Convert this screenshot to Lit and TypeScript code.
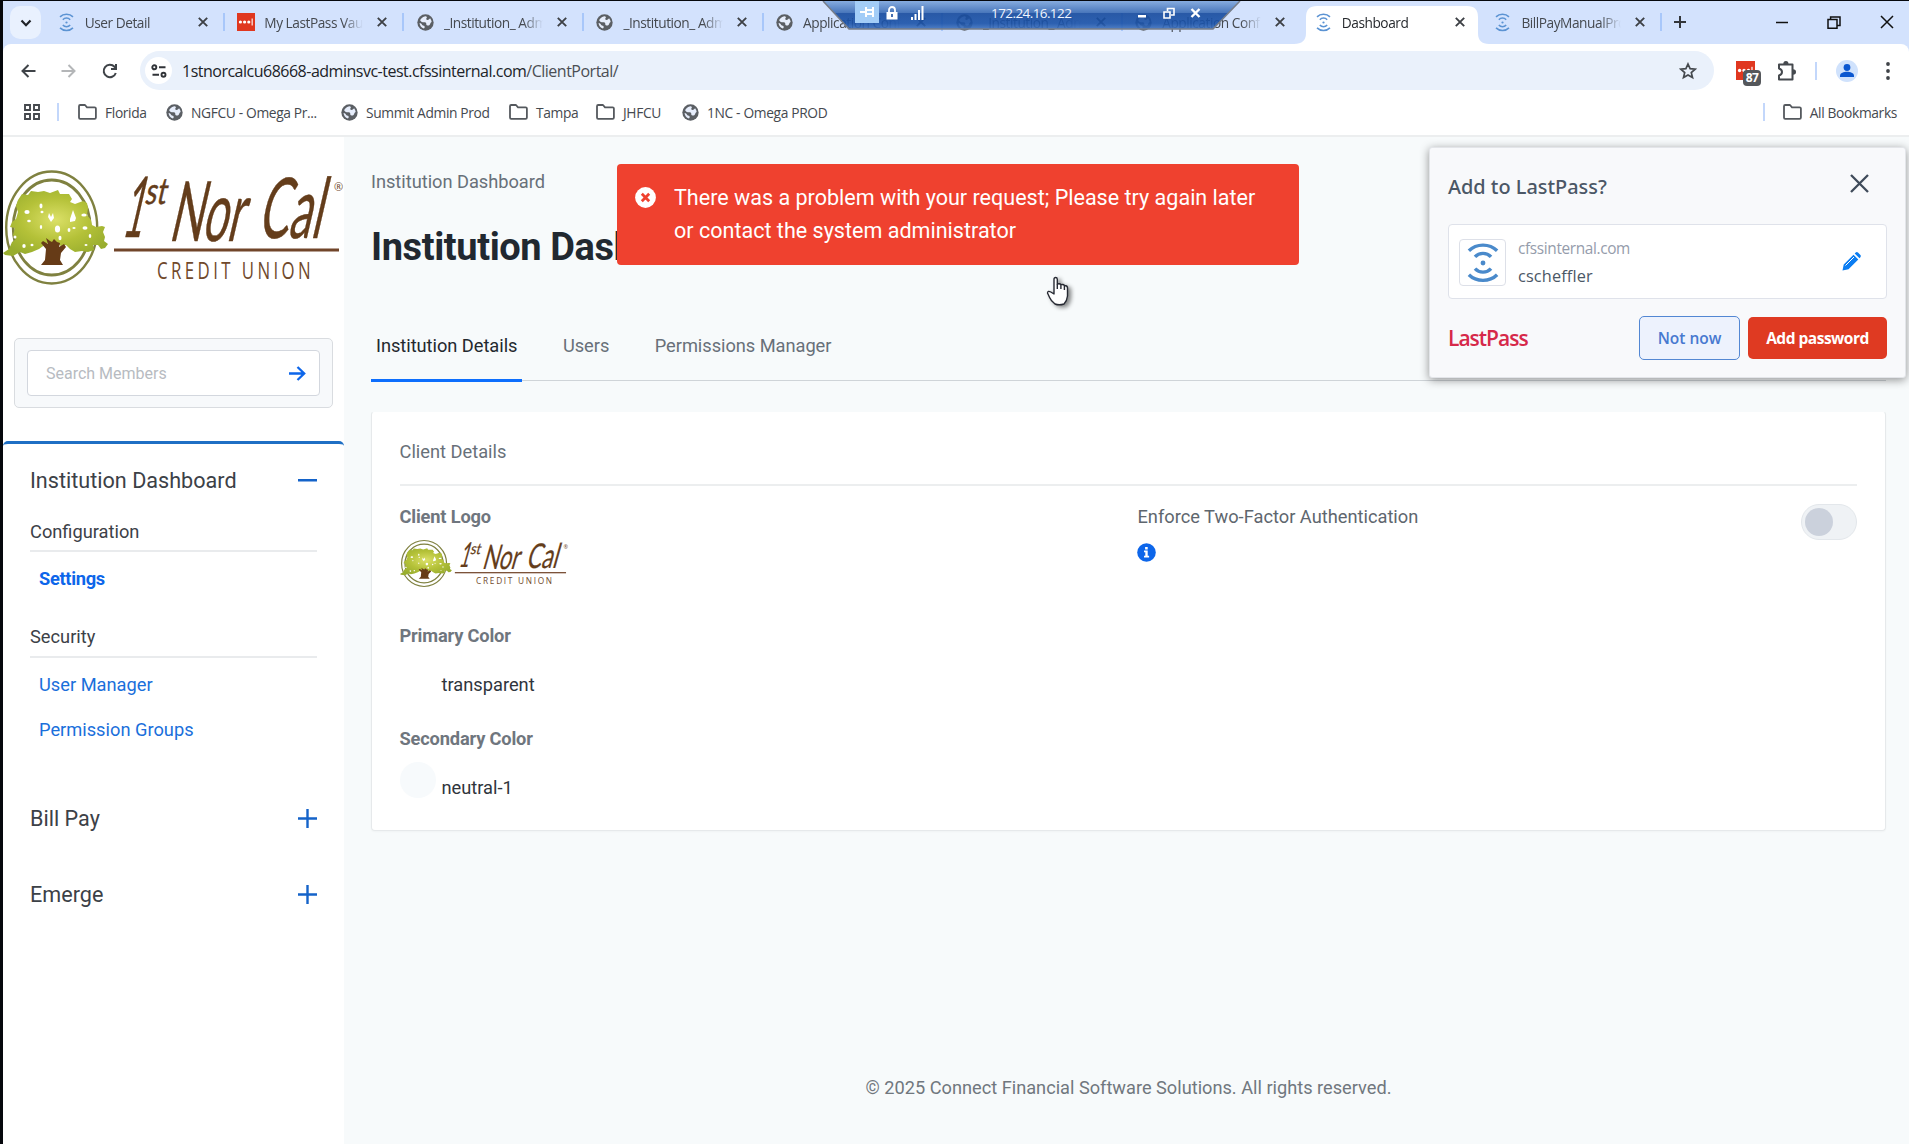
import { LitElement, html, css, svg, nothing } from "lit";
import { customElement, property } from "lit/decorators.js";

const wave = html`<svg viewBox="0 0 34 44" fill="none" stroke="currentColor" stroke-width="3.6" stroke-linecap="butt"><path d="M2 9C10 1 24 1 32 9M8.500 15.500C13 10.500 21 10.500 25.500 15.500M8.500 28C13 33 21 33 25.500 28M2 34.500C10 42.500 24 42.500 32 34.500"/><circle cx="17" cy="22" r="2.600" fill="currentColor" stroke="none"/></svg>`;
const globe = html`<svg viewBox="0 0 24 24"><circle cx="12" cy="12" r="11.500" fill="#5b5f64"/><path fill="#e6edfb" d="M10.800 3.400c-3 .8-5.200 2.600-6.400 5.400 1.200 2.400 3.400 2.900 5.600 2.900 2.400 0 3.200.9 3.100 2.600 0 1.500 1.300 1.700 2.900 1.800 1.800.2 2.200-1 2.800-2.600.4-1.200 1.300-1.500 1.900-2.500-.3-1.900-1-3.600-2.200-5-1 .6-1.300 1.800-2.500 2.200-1.300.3-2.700.1-2.900-1.200-.1-1.200 1.200-1.600.8-2.700-.4-.9-1.800-1.200-3.100-.9z"/><path fill="#e6edfb" d="M3.600 12.600c.2 3.600 2.600 6.700 6.200 7.800 1-.5 1.300-1.400 1-2.600-.3-1-1.200-1.200-2.300-1.500-1.500-.4-1.500-1.700-2.300-2.600-.6-.7-1.500-1-2.600-1.100z"/></svg>`;
const vault = html`<svg viewBox="0 0 18 18"><rect width="18" height="18" fill="#e0371f"/><g fill="#fff"><circle cx="3.400" cy="9" r="1.600"/><circle cx="7.600" cy="9" r="1.600"/><circle cx="11.800" cy="9" r="1.600"/><rect x="14.600" y="5.500" width="1.100" height="7"/></g></svg>`;
const folder = html`<svg viewBox="0 0 19 16" fill="none" stroke="#55595e" stroke-width="1.800" stroke-linejoin="round"><path d="M1 2.200Q1 1 2.200 1H7l2 2.300h7.600q1.300 0 1.300 1.300v9q0 1.300-1.300 1.300H2.200Q1 14.900 1 13.600Z"/></svg>`;
const cross = html`<svg viewBox="0 0 12 12" stroke="currentColor" stroke-width="1.900"><path d="M1.800 1.800l8.400 8.400M10.200 1.800L1.800 10.200"/></svg>`;
const tree = svg`
  <g fill="none" stroke="#7f8140"><ellipse cx="48.700" cy="57.500" rx="45.500" ry="56" stroke-width="2.400"/><ellipse cx="48.700" cy="57.500" rx="38.500" ry="47.500" stroke-width="2.800"/></g>
  <path fill="url(#leaf)" d="M15 30L19 24L25 25L28 21L35 22L41 21L47 23L55 20L57 24L66 24L69 29L67 32L72 34L80 31L84 33L85 38L84 45L88 50L89 55L93 57L99 56L102 57L100 62L102 67L101 71L105 74L102 78L98 79L95 75L90 75L91 80L85 82L79 81L72 82L67 79L63 75L58 76L50 72L43 74L36 79L29 82L22 84L17 82L10 86L2 85L0 83L6 79L9 72L13 69L10 65L12 58L7 57L9 52L13 49L15 42L13 36Z"/>
  <g fill="#fff"><ellipse cx="38" cy="36" rx="1.500" ry="2.400"/><path d="M46 43l2 4 2-4 1 5-3 4-3-5zM67 49l3-9 3 8-1 3-5 1z"/><ellipse cx="54.500" cy="59" rx="2.600" ry="3.500"/><ellipse cx="26" cy="51" rx="1.800" ry="1.200"/><ellipse cx="24" cy="42" rx="2.600" ry="2"/><ellipse cx="39" cy="42" rx="1.500" ry="1.300"/><ellipse cx="82" cy="58" rx="2.500" ry="1.700"/><ellipse cx="57" cy="68" rx="1.500" ry="2.300"/><ellipse cx="87" cy="66" rx="1.300" ry="2"/><ellipse cx="38" cy="57" rx="1.200" ry="2"/><ellipse cx="21" cy="76" rx="1.700" ry="2"/><ellipse cx="29" cy="75" rx="1.500" ry="1.300"/><ellipse cx="66" cy="60" rx="1.400" ry="2"/><ellipse cx="81" cy="45" rx="2.700" ry="1.500"/><ellipse cx="71" cy="58" rx="1.600" ry="1"/><ellipse cx="12" cy="67" rx="1.500" ry="1.500"/><ellipse cx="83" cy="75" rx="1.500" ry="1"/></g>
  <path fill="#663b17" d="M38 95l4-5 1-11-5-6 2-2 5 3-2-6 4 3 2 1 2-3 3 3 3 1-1 4 5-3 2 3-5 6-1 7 3 5z"/>`;

@customElement("union-logo")
export class UnionLogo extends LitElement {
  static styles = css`
    :host { display: block; }
    svg { display: block; width: 100%; height: 100%; overflow: visible; }
    .script { font-family: Lato, "Open Sans", sans-serif; fill: #643d1b; stroke: #643d1b; stroke-width: .5; font-weight: 400; }
    .caps { font-family: "Open Sans", sans-serif; fill: #70492b; }
  `;
  render() {
    return html`<svg viewBox="0 0 342 115" preserveAspectRatio="none">
      <defs><radialGradient id="leaf" cx=".5" cy=".45" r=".6"><stop offset="0" stop-color="#dbe067"/><stop offset=".55" stop-color="#b4c138"/><stop offset="1" stop-color="#98ad2e"/></radialGradient></defs>
      ${tree}
      <text class="script" transform="translate(118 67) skewX(-13) scale(.42 1)" font-size="84">1</text>
      <text class="script" transform="translate(141 34) skewX(-13) scale(.72 1)" font-size="37">st</text>
      <text class="script" transform="translate(165 71) skewX(-13) scale(.53 1)" font-size="83">Nor</text>
      <text class="script" transform="translate(254 68) skewX(-13) scale(.54 1)" font-size="84">Cal</text>
      <text class="caps" x="331" y="21" font-size="11">®</text>
      <rect x="111" y="78.500" width="225" height="3" fill="#71452a"/>
      <text class="caps" transform="translate(154 108.500) scale(.7 1)" font-size="24" letter-spacing="4.900">CREDIT UNION</text>
    </svg>`;
  }
}

@customElement("browser-tab")
export class BrowserTab extends LitElement {
  @property() label = "";
  @property() icon = "globe";
  @property({ type: Boolean }) active = false;
  @property({ type: Boolean }) divided = false;
  static styles = css`
    :host { display: block; flex: none; width: 179.6px; height: 43px; position: relative; }
    .tab { box-sizing: border-box; height: 42px; display: flex; align-items: center; padding: 0 17px 0 11px; position: relative; }
    .icon { flex: none; width: 18px; height: 20px; display: flex; align-items: center; justify-content: center; color: #5b93d3; }
    .icon svg { width: 17px; height: 17px; }
    .icon.wave svg { height: 19px; }
    .icon.vault svg { width: 18px; height: 18px; }
    .label { flex: 1; margin-left: 9.500px; margin-right: 13px; overflow: hidden; white-space: nowrap; font: 13.700px "Open Sans", sans-serif; letter-spacing: -.46px; color: #45494f;
      -webkit-mask-image: linear-gradient(90deg, #000 80%, transparent); mask-image: linear-gradient(90deg, #000 80%, transparent); }
    .active .label { color: #26292d; }
    .close { flex: none; width: 12px; height: 12px; color: #3d4045; }
    .close svg { display: block; }
    .shape { position: absolute; left: -9px; top: 5px; width: 195px; height: 38px; }
    .line { position: absolute; right: 1px; top: 12px; width: 2px; height: 18px; background: #a8c7fa; }
  `;
  render() {
    const glyph = this.icon === "wave" ? wave : this.icon === "vault" ? vault : globe;
    return html`
      ${this.active ? html`<svg class="shape" viewBox="0 0 195 38"><path fill="#fff" d="M0 38Q12 38 12 27V11Q12 0 23 0H173Q184 0 184 11V27Q184 38 195 38Z"/></svg>` : nothing}
      <div class="tab ${this.active ? "active" : ""}"><span class="icon ${this.icon}">${glyph}</span><span class="label">${this.label}</span><span class="close">${cross}</span></div>
      ${this.divided ? html`<span class="line"></span>` : nothing}`;
  }
}

const tabs = [
  ["User Detail", "wave", 1], ["My LastPass Vault", "vault", 1], ["_Institution_ Admin", "globe", 1], ["_Institution_ Admin", "globe", 1],
  ["Application Config", "globe", 1], ["_Institution_ Admin", "globe", 1], ["Application Config", "globe", 0], ["Dashboard", "wave", 0], ["BillPayManualProc", "wave", 1],
] as const;

@customElement("browser-chrome")
export class BrowserChrome extends LitElement {
  static styles = css`
    :host { display: block; position: relative; font-family: "Open Sans", sans-serif; }
    svg { display: block; flex: none; }
    .strip { display: flex; align-items: center; height: 43px; background: #d3e2fd; }
    .search { flex: none; width: 31px; height: 33px; margin: 0 5.200px 0 7px; border-radius: 10px; background: #e9f1fe; display: flex; align-items: center; justify-content: center; }
    .plus { margin-left: 10px; margin-bottom: 1px; }
    .window { margin-left: auto; display: flex; align-items: center; gap: 39px; padding: 0 15px 1px 0; }
    .bar { display: flex; align-items: center; height: 53px; background: #fff; border-radius: 8px 8px 0 0; }
    .under { background: #d3e2fd; }
    .nav { display: flex; align-items: center; width: 137px; box-sizing: border-box; padding-left: 17.500px; gap: 25.500px; }
    .omni { display: flex; align-items: center; width: 1574px; height: 39px; box-sizing: border-box; background: #eaf1fb; border-radius: 20px; padding: 0 17px 0 6px; }
    .site { width: 27px; height: 27px; border-radius: 50%; background: #fff; display: flex; align-items: center; justify-content: center; margin-left: -1px; }
    .url { flex: 1; margin-left: 10px; font-size: 16px; letter-spacing: -.5px; color: #202328; white-space: nowrap; }
    .url span { color: #4a4e54; }
    .ext { display: flex; align-items: center; margin-left: 22px; }
    .pass { position: relative; width: 19px; height: 19px; }
    .pass svg { width: 19px; height: 19px; }
    .badge { position: absolute; left: 7px; top: 9px; width: 18px; height: 16px; border-radius: 4px; background: #54575b; color: #fff; font: 700 12px/16px "Open Sans", sans-serif; text-align: center; letter-spacing: -.5px; }
    .rule { flex: none; width: 2px; height: 18px; background: #c3d7fb; }
    .avatar { width: 22px; height: 22px; border-radius: 50%; background: #d0e2fc; }
    .marks { display: flex; align-items: center; background: #fff; border-bottom: 2px solid #eceeef; padding: 0 12px 8px 21px; height: 30px; font-size: 13.800px; letter-spacing: -.36px; color: #45494f; white-space: nowrap; }
    .mark { display: flex; align-items: center; gap: 8px; }
    .all { margin-left: auto; }
    .remote { position: absolute; left: 819px; top: 0; width: 419px; height: 28px; }
    .shape { position: absolute; inset: 0; }
    .items { position: relative; display: flex; align-items: center; height: 24px; padding-left: 33px; color: #fff; }
    .pin { width: 24px; height: 22px; background: #a3cdf7; display: flex; align-items: center; justify-content: center; align-self: flex-start; }
    .ip { width: 80px; margin: 0 67px 0 67px; font-size: 13.500px; letter-spacing: -.58px; white-space: nowrap; color: #f0f5ff; }
  `;
  render() {
    return html`
      <div class="strip">
        <span class="search"><svg width="12" height="12" viewBox="0 0 12 12" fill="none" stroke="#202328" stroke-width="2.200"><path d="M1.500 3.500L6 8.200l4.500-4.700"/></svg></span>
        ${tabs.map(([t, i, d]) => html`<browser-tab .label=${t} .icon=${i} .divided=${!!d} .active=${t === "Dashboard"}></browser-tab>`)}
        <svg class="plus" width="14" height="14" viewBox="0 0 14 14" stroke="#33363a" stroke-width="2"><path d="M7 1v12M1 7h12"/></svg>
        <span class="window">
          <svg width="12" height="12" viewBox="0 0 12 12" stroke="#111" stroke-width="1.500"><path d="M0 6.500h12"/></svg>
          <svg width="14" height="13" viewBox="0 0 14 13" fill="none" stroke="#111" stroke-width="1.500"><path d="M1 3.600h9v8.600H1zM3.600 3.500V1H13v8.500h-2.600"/></svg>
          <svg width="14" height="14" viewBox="0 0 14 14" stroke="#111" stroke-width="1.500"><path d="M1 1l12 12M13 1L1 13"/></svg>
        </span>
      </div>
      <div class="under"><div class="bar">
        <div class="nav">
          <svg width="15" height="14" viewBox="0 0 15 14" fill="none" stroke="#3f4348" stroke-width="2"><path d="M14.500 7H1.500M7.500 1l-6 6 6 6"/></svg>
          <svg width="15" height="14" viewBox="0 0 15 14" fill="none" stroke="#b4b6b8" stroke-width="2"><path d="M.5 7h13M7.500 1l6 6-6 6"/></svg>
          <svg width="16" height="16" viewBox="0 0 16 16" fill="none" stroke="#3f4348" stroke-width="2"><path d="M13.800 10A6.200 6.200 0 1 1 12.500 3.800L14 5.400M14 1v5H9"/></svg>
        </div>
        <div class="omni">
          <span class="site"><svg width="16" height="14" viewBox="0 0 16 14" fill="none" stroke="#303338" stroke-width="1.900"><circle cx="3.300" cy="3.300" r="2"/><path d="M8 3.300h6.500M1.500 10.700H8"/><circle cx="12.500" cy="10.700" r="2"/></svg></span>
          <span class="url">1stnorcalcu68668-adminsvc-test.cfssinternal.com<span>/ClientPortal/</span></span>
          <svg width="18" height="18" viewBox="0 0 18 18" fill="none" stroke="#45494e" stroke-width="1.700" stroke-linejoin="miter"><path d="M9 2l2.100 4.700 5.100.5-3.900 3.400 1.200 5L9 12.900l-4.500 2.700 1.200-5L1.800 7.200l5.100-.5z"/></svg>
        </div>
        <div class="ext">
          <span class="pass">${vault}<span class="badge">87</span></span>
          <svg style="margin-left:22px" width="20" height="22" viewBox="0 0 20 22" fill="none" stroke="#45494e" stroke-width="2" stroke-linejoin="round"><path d="M2 4.500H15.500V19.500H2V15.500Q5 14.500 5 12T2 8.500Z"/><path fill="#45494e" stroke="none" d="M6.300 4Q6.300 1 8.900 1t2.600 3zM16 9.300Q19 9.300 19 12t-3 2.700z"/></svg>
          <span class="rule" style="margin:0 19px 0 18px"></span>
          <span class="avatar"><svg width="22" height="22" viewBox="0 0 22 22" fill="#0b57d0"><circle cx="11" cy="7.500" r="3.400"/><path d="M4 17v-1.500c0-2.600 4-3.800 7-3.800s7 1.200 7 3.800V17z"/></svg></span>
          <svg style="margin-left:28px" width="4" height="18" viewBox="0 0 4 18" fill="#3f4348"><circle cx="2" cy="2" r="1.900"/><circle cx="2" cy="9" r="1.900"/><circle cx="2" cy="16" r="1.900"/></svg>
        </div>
      </div></div>
      <div class="marks">
        <svg width="16" height="16" viewBox="0 0 16 16" fill="none" stroke="#45494e" stroke-width="1.900"><path d="M1 1h5v5H1zM10 1h5v5h-5zM1 10h5v5H1zM10 10h5v5h-5z"/></svg>
        <span class="rule" style="margin:0 19px 0 17px"></span>
        <span class="mark" style="width:88px"><svg width="19" height="16">${folder}</svg>Florida</span>
        <span class="mark" style="width:175px"><svg width="17" height="17">${globe}</svg>NGFCU - Omega Pr...</span>
        <span class="mark" style="width:168px"><svg width="17" height="17">${globe}</svg>Summit Admin Prod</span>
        <span class="mark" style="width:87px"><svg width="19" height="16">${folder}</svg>Tampa</span>
        <span class="mark" style="width:86px"><svg width="19" height="16">${folder}</svg>JHFCU</span>
        <span class="mark"><svg width="17" height="17">${globe}</svg>1NC - Omega PROD</span>
        <span class="rule all"></span>
        <span class="mark" style="margin-left:18px"><svg width="19" height="16">${folder}</svg>All Bookmarks</span>
      </div>
      <div class="remote">
        <svg class="shape" width="419" height="29" viewBox="0 0 419 29"><defs><linearGradient id="rg" x2="0" y2="1"><stop offset="0" stop-color="#7ea6dc"/><stop offset=".42" stop-color="#3a6bb4"/><stop offset=".44" stop-color="#164a9d"/><stop offset=".8" stop-color="#1a52a8"/><stop offset="1" stop-color="#4174bf"/></linearGradient></defs><path fill="url(#rg)" fill-opacity=".9" stroke="#777d88" stroke-width="1.500" d="M1 0L27 28H391L418 0"/></svg>
        <div class="items">
          <span class="pin"><svg width="14" height="12" viewBox="0 0 14 12" fill="none" stroke="#fff" stroke-width="2"><path d="M0 6h5M6 1v10M7 4h5M7 8h5M13 1v10"/></svg></span>
          <svg style="margin-left:7px" width="12" height="14" viewBox="0 0 12 14"><path d="M3 7V4a3 3 0 0 1 6 0v3" fill="none" stroke="#fff" stroke-width="1.800"/><rect x=".5" y="6" width="11" height="7.500" fill="#fff"/><path d="M6 8v3" stroke="#164a9d" stroke-width="1.600"/></svg>
          <svg style="margin-left:13px" width="13" height="14" viewBox="0 0 13 14" fill="#fff"><path d="M0 11h2v3H0zM3.500 8h2v6h-2zM7 4h2v10H7zM10.500 0h2v14h-2z"/></svg>
          <span class="ip">172.24.16.122</span>
          <svg width="8" height="12" viewBox="0 0 8 12" fill="#fff"><path d="M0 8h8v2.500H0z"/></svg>
          <svg style="margin-left:17px" width="12" height="12" viewBox="0 0 12 12" fill="none" stroke="#fff" stroke-width="1.600"><path d="M1 5h6v6H1zM4.500 4V1.500H11V8H8"/></svg>
          <svg style="margin-left:15px" width="11" height="10" viewBox="0 0 11 10" stroke="#fff" stroke-width="2.400"><path d="M1.500 1l8 8M9.500 1l-8 8"/></svg>
        </div>
      </div>`;
  }
}

@customElement("side-panel")
export class SidePanel extends LitElement {
  static styles = css`
    :host { display: block; width: 341px; flex: none; background: #fff; font-family: Roboto, sans-serif; color: #3c4147; }
    svg { display: block; flex: none; }
    union-logo { width: 342px; height: 115px; margin-top: 33px; }
    .find { margin: 53px 11px 0 11px; box-sizing: border-box; height: 70px; padding: 11px 12px; border: 1px solid #d9dce0; border-radius: 5px; background: #f7f9fb; }
    .field { box-sizing: border-box; height: 46px; border: 1px solid #d3d7de; border-radius: 4px; background: #fff; display: flex; align-items: center; justify-content: space-between; padding: 0 13px 0 18px; font-size: 16px; color: #b7bbc1; }
    nav { margin-top: 33px; border-top: 3px solid #1f6fc4; border-radius: 5px; padding: 0 27px; }
    .top { display: flex; align-items: center; justify-content: space-between; font-size: 21.600px; white-space: nowrap; }
    .group { font-size: 18.260px; border-bottom: 2px solid #e9ebed; box-sizing: border-box; display: flex; align-items: center; padding-bottom: 1px; }
    .link { font-size: 18.260px; color: #1a6fdb; padding-left: 9px; display: flex; align-items: center; }
    .current { color: #0d66ea; font-weight: 700; letter-spacing: -.3px; }
  `;
  render() {
    const plus = html`<svg width="19" height="19" viewBox="0 0 19 19" stroke="#1463c9" stroke-width="2.400"><path d="M9.500 0v19M0 9.500h19"/></svg>`;
    return html`
      <union-logo></union-logo>
      <div class="find"><div class="field">Search Members<svg width="17" height="15" viewBox="0 0 17 15" fill="none" stroke="#0d66ea" stroke-width="2.300"><path d="M0 7.500h15M8.500 1l6.700 6.500-6.700 6.500"/></svg></div></div>
      <nav>
        <div class="top" style="height:67px;padding-top:3px">Institution Dashboard<svg width="19" height="3"><rect width="19" height="2.500" fill="#1463c9"/></svg></div>
        <div class="group" style="height:38px;padding-bottom:2px">Configuration</div>
        <div class="link current" style="height:52px">Settings</div>
        <div class="group" style="margin-top:13px;height:41px;padding-bottom:0">Security</div>
        <div class="link" style="height:52px">User Manager</div>
        <div class="link" style="height:39px">Permission Groups</div>
        <div class="top" style="height:77px;margin-top:31px">Bill Pay${plus}</div>
        <div class="top" style="height:75px">Emerge${plus}</div>
      </nav>`;
  }
}

@customElement("dashboard-page")
export class DashboardPage extends LitElement {
  static styles = css`
    :host { display: flex; flex-direction: column; flex: 1; background: #f7fafb; padding: 0 23px 0 27px; font-family: Roboto, sans-serif; font-size: 18.260px; color: #687079; box-sizing: border-box; }
    svg { display: block; }
    .crumb { height: 24px; line-height: 24px; margin-top: 33px; letter-spacing: -.03px; }
    h1 { margin: 30px 0 0; font-size: 38px; line-height: 46px; letter-spacing: -.4px; font-weight: 700; color: #212830; white-space: nowrap; }
    .tabs { display: flex; gap: 35.500px; margin-top: 45px; height: 66px; box-sizing: border-box; border-bottom: 1px solid #cfd4d8; padding-top: 4px; }
    .tab { box-sizing: border-box; padding: 16px 5px 0; height: 63px; white-space: nowrap; letter-spacing: -.04px; }
    .on { color: #23282e; border-bottom: 3px solid #0d6efd; }
    .card { margin-top: 30px; height: 420px; box-sizing: border-box; background: #fff; border: 1px solid #e6e9eb; border-top-color: #f7fafb; border-radius: 4px; padding: 0 28px 0 27.500px; box-shadow: 0 1px 2px #00000008; }
    .head { height: 74px; box-sizing: border-box; border-bottom: 2px solid #eceeef; padding-top: 29px; line-height: 22px; }
    .cols { display: grid; grid-template-columns: 738px 1fr; }
    b { display: block; line-height: 22px; font-weight: 700; color: #6f767e; letter-spacing: -.17px; }
    union-logo { width: 169px; height: 47px; margin-top: 12px; }
    .swatch { display: flex; align-items: flex-start; gap: 6px; color: #2f353c; }
    .dot { width: 36px; height: 36px; border-radius: 50%; }
    .neutral { background: #f7fafc; }
    .name { padding-top: 15px; line-height: 22px; }
    .auth { display: flex; justify-content: space-between; align-items: flex-start; padding-top: 20px; color: #5e666e; }
    .info { margin-top: 16px; margin-left: -.5px; }
    .switch { width: 56px; height: 36px; box-sizing: border-box; border: 1px solid #e3e7eb; border-radius: 18px; background: #eff2f5; padding: 3px; margin-top: -2px; }
    .knob { width: 28px; height: 28px; border-radius: 50%; background: #cbd1dc; }
    footer { margin-top: auto; height: 69px; text-align: center; line-height: 26px; font-size: 18.190px; color: #70777e; white-space: nowrap; }
  `;
  render() {
    return html`
      <div class="crumb">Institution Dashboard</div>
      <h1>Institution Dashboard</h1>
      <div class="tabs"><div class="tab on">Institution Details</div><div class="tab">Users</div><div class="tab">Permissions Manager</div></div>
      <div class="card">
        <div class="head">Client Details</div>
        <div class="cols">
          <div>
            <b style="margin-top:20px">Client Logo</b>
            <union-logo></union-logo>
            <b style="margin-top:38px">Primary Color</b>
            <div class="swatch" style="margin-top:12px"><span class="dot"></span><span class="name">transparent</span></div>
            <b style="margin-top:32px">Secondary Color</b>
            <div class="swatch" style="margin-top:12px"><span class="dot neutral"></span><span class="name">neutral-1</span></div>
          </div>
          <div class="auth">
            <div>Enforce Two-Factor Authentication
              <svg class="info" width="19" height="19" viewBox="0 0 19 19"><circle cx="9.500" cy="9.500" r="9.300" fill="#0d66ea"/><path fill="#fff" d="M8.100 4h2.600v2.400H8.100zM7 7.600h3.700v5.200h1.400v1.600H7v-1.600h1.300V9.200H7z"/></svg></div>
            <span class="switch"><div class="knob"></div></span>
          </div>
        </div>
      </div>
      <footer>© 2025 Connect Financial Software Solutions. All rights reserved.</footer>`;
  }
}

@customElement("pass-prompt")
export class PassPrompt extends LitElement {
  static styles = css`
    :host { display: block; box-sizing: border-box; width: 477px; height: 231px; background: #f8f9fb; border: 1px solid #e3e5e9; border-radius: 3px; padding: 0 18px; box-shadow: 0 2px 10px #0000006b; font-family: "Open Sans", sans-serif; color: #4b5766; white-space: nowrap; }
    svg { display: block; }
    .head { display: flex; align-items: center; justify-content: space-between; height: 76px; box-sizing: border-box; padding-right: 18px; font: 500 19.900px "Noto Sans", sans-serif; }
    .head svg { margin-bottom: 5px; }
    .site { display: flex; align-items: center; box-sizing: border-box; height: 75px; padding: 0 25px 0 10px; background: #fff; border: 1px solid #dfe2ea; border-radius: 4px; }
    .fav { box-sizing: border-box; width: 47px; height: 47px; border: 1px solid #dde0e8; border-radius: 4px; display: flex; align-items: center; justify-content: center; color: #4a8acb; margin-top: 2px; }
    .fav svg { width: 32px; height: 44px; }
    .who { flex: 1; margin-left: 12px; font-size: 16.300px; line-height: 28px; letter-spacing: .15px; }
    .who div:first-child { color: #959cab; font-size: 15.400px; letter-spacing: -.36px; padding-top: 1px; line-height: 27px; }
    .foot { display: flex; align-items: center; height: 78px; font: 700 15.500px "Open Sans", sans-serif; }
    .brand { flex: 1; color: #d6294a; font: 600 21px "Open Sans", sans-serif; letter-spacing: -1px; }
    .no, .yes { box-sizing: border-box; display: flex; align-items: center; justify-content: center; border-radius: 5px; }
    .no { width: 101px; height: 44px; border: 1.500px solid #5387d3; background: #edf2fd; color: #4779d0; font-weight: 600; margin-right: 8px; }
    .yes { width: 139px; height: 42px; background: #df3a22; color: #fff; letter-spacing: -.5px; }
  `;
  render() {
    return html`
      <div class="head">Add to LastPass?<svg width="19" height="19" viewBox="0 0 19 19" stroke="#3f4b5a" stroke-width="2.300"><path d="M1 1l17 17M18 1L1 18"/></svg></div>
      <div class="site"><span class="fav">${wave}</span><div class="who"><div>cfssinternal.com</div><div>cscheffler</div></div>
        <svg width="19" height="19" viewBox="0 0 19 19"><path fill="#0b7df2" d="M.5 18.500l1.200-6L11.500 2.700l4.800 4.800L6.500 17.300zM12.700 1.500l1-1q1.300-.8 2.300.1L18.400 3q.9 1 0 2.200l-.9 1z"/><path d="M3.500 13.500l8.500-8.500" stroke="#fff" stroke-width="1"/></svg></div>
      <div class="foot"><span class="brand">LastPass</span><span class="no">Not now</span><span class="yes">Add password</span></div>`;
  }
}

@customElement("app-root")
export class AppRoot extends LitElement {
  static styles = css`
    :host { display: block; }
    .app { position: relative; width: 1909px; height: 1144px; overflow: hidden; box-sizing: border-box; padding: 1px 0 0 3px; background: #05070c; display: flex; flex-direction: column; }
    .body { flex: 1; display: flex; background: #fff; }
    .alert { position: absolute; left: 617px; top: 164px; width: 682px; height: 101px; box-sizing: border-box; padding: 17px 0 17px 18px; background: #ef412f; border-radius: 4px; display: flex; gap: 18px; color: #fff; font: 21.560px/33.400px Roboto, sans-serif; }
    .alert svg { flex: none; margin-top: 6px; }
    .alert div { white-space: nowrap; }
    pass-prompt { position: absolute; left: 1429px; top: 147px; }
    .cursor { position: absolute; left: 1046px; top: 276px; filter: drop-shadow(3px 2px 2px #0007); }
  `;
  render() {
    return html`<div class="app">
      <browser-chrome></browser-chrome>
      <div class="body"><side-panel></side-panel><dashboard-page></dashboard-page></div>
      <div class="alert" role="alert"><svg width="21" height="21" viewBox="0 0 21 21"><circle cx="10.500" cy="10.500" r="10.400" fill="#fff"/><path d="M6.800 6.800l7.400 7.400M14.200 6.800l-7.400 7.400" stroke="#ef412f" stroke-width="2.800"/></svg><div>There was a problem with your request; Please try again later<br>or contact the system administrator</div></div>
      <pass-prompt></pass-prompt>
      <svg class="cursor" width="24" height="30" viewBox="0 0 24 30" fill="#fff" stroke="#272a33" stroke-width="1.400" stroke-linejoin="round"><path d="M8 18V3.200q0-1.700 1.600-1.700t1.700 1.700V8q3-.6 3.600.6 3-.5 3.500.9 3-.1 3.100 2.300V20q-.5 5-3.500 8-5 1.600-9 0Q5 25 3.600 21.500L1.500 17q.3-2.700 3.300-1z"/><path fill="none" d="M11.300 8v5M14.900 8.600V13M18.400 9.500V14"/></svg>
    </div>`;
  }
}
